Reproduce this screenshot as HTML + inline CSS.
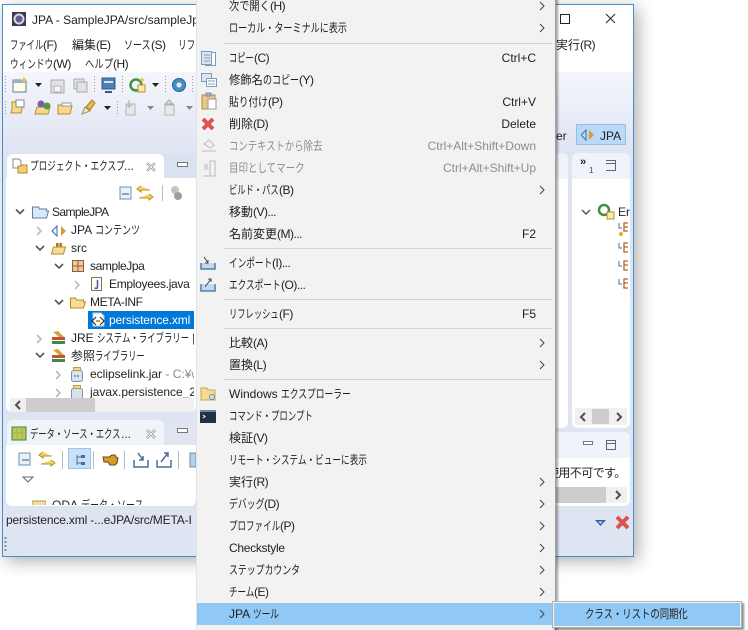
<!DOCTYPE html>
<html><head><meta charset="utf-8"><style>
html,body{margin:0;padding:0;background:#fff}
#r{position:relative;width:748px;height:630px;overflow:hidden;background:#fff;font:12px/16px "Liberation Sans","Noto Sans CJK JP",sans-serif;color:#222}
#r div,#r svg{position:absolute}
.t{white-space:nowrap;height:16px}
.m{left:229px;white-space:nowrap;height:16px;color:#1e1e1e}
.k{right:212px;white-space:nowrap;height:16px;color:#1e1e1e;text-align:right}
.g{color:#8c8c8c}
.s{left:224px;width:328px;height:1px;background:#d4d4d4}
.l{left:0;top:0}
.n{display:inline-block;transform-origin:0 0;white-space:nowrap}
.p{letter-spacing:-.5px}
</style></head><body><div id="r">
<!-- window -->
<div style="left:2px;top:4px;width:632px;height:553px;background:#fff;border:1px solid #3f8fd2;box-sizing:border-box;box-shadow:4px 4px 16px rgba(0,0,0,.32)"></div>
<div style="left:3px;top:72px;width:630px;height:484px;background:linear-gradient(#f5f6fb,#dfe4f3 80px,#dfe4f3)"></div>
<svg style="left:11px;top:11px" width="16" height="16"><rect x="1" y="1" width="14" height="14" fill="#3b3a55"/><circle cx="8" cy="8" r="4.500" fill="#5f5d90" stroke="#d8d8e4" stroke-width="2"/></svg>
<div class="t" style="left:32px;top:12px;color:#222">JPA - SampleJPA/src/sampleJpa</div>
<svg style="left:560px;top:13px" width="60" height="12"><rect x="0.5" y="1.500" width="9" height="9" fill="none" stroke="#222"/><path d="M46 1l9 9M55 1l-9 9" stroke="#222" fill="none"/></svg>
<div class="t" style="left:10px;top:37px"><span class="n" style="width:33px;transform:scaleX(.69)">ファイル</span><span class="p">(F)</span></div>
<div class="t" style="left:72px;top:37px">編集<span class="p">(E)</span></div>
<div class="t" style="left:124px;top:37px"><span class="n" style="width:27px;transform:scaleX(.75)">ソース</span><span class="p">(S)</span></div>
<div class="t" style="left:178px;top:37px"><span class="n" style="width:17px;transform:scaleX(.72)">リフ</span></div>
<div class="t" style="left:556px;top:37px">実行<span class="p">(R)</span></div>
<div class="t" style="left:10px;top:56px"><span class="n" style="width:43px;transform:scaleX(.72)">ウィンドウ</span><span class="p">(W)</span></div>
<div class="t" style="left:85px;top:56px"><span class="n" style="width:28px;transform:scaleX(.78)">ヘルプ</span><span class="p">(H)</span></div>
<!-- toolbar icons -->
<svg class="l" style="left:0;top:72px" width="196" height="50">
<g fill="none" stroke="#9a9a9a" stroke-dasharray="1 2"><path d="M5.500 4V20M5.500 29V44M94.500 4V20M122.500 4V20M165.500 4V20M192.500 4V20M117.500 29V44"/></g>
<rect x="13" y="8" width="13" height="12" fill="#fffbe8" stroke="#5c7fa8"/><rect x="13" y="8" width="13" height="3" fill="#8fb2d6"/><path d="M24 4l1 3 3 1-3 1-1 3-1-3-3-1 3-1z" fill="#e9c23c"/>
<path d="M35 11h7l-3.500 4z" fill="#222"/>
<rect x="51" y="8" width="13" height="13" fill="#e2e2e2" stroke="#aaa"/><rect x="54" y="14" width="7" height="6" fill="#f5f5f5" stroke="#b5b5b5"/>
<rect x="74" y="7" width="10" height="10" fill="#e2e2e2" stroke="#aaa"/><rect x="77" y="10" width="10" height="10" fill="#e2e2e2" stroke="#aaa"/>
<rect x="102" y="6" width="13" height="11" fill="#4f7fb0" stroke="#2f5c8c"/><rect x="104" y="9" width="9" height="2" fill="#d6e4f2"/><path d="M105 20h7" stroke="#2f5c8c" stroke-width="2"/>
<circle cx="136" cy="13" r="5.500" fill="none" stroke="#3d9140" stroke-width="2.500"/><rect x="138" y="13" width="7" height="7" fill="#fbe9b4" stroke="#c08a2a"/><path d="M142 5l1 2 2 1-2 1-1 2-1-2-2-1 2-1z" fill="#e9c23c"/>
<path d="M152 11h7l-3.500 4z" fill="#222"/>
<circle cx="179" cy="13" r="6.500" fill="#4a8fc4" stroke="#1f6098"/><circle cx="179" cy="13" r="2.500" fill="#e8eef5"/>
<path d="M12 37v-7h8l2 2v5l-1 4H11z" fill="#f6d98a" stroke="#b88a2c"/><rect x="16" y="28" width="8" height="7" fill="#fff" stroke="#888"/>
<path d="M35 42l2-7h13l-2 7z" fill="#f6d98a" stroke="#b88a2c"/><circle cx="41" cy="32" r="3.500" fill="#7b5ea8"/><circle cx="47" cy="34" r="3.500" fill="#4b9a45"/>
<path d="M58 42v-9h5l1-2h6v3h2l-2 8z" fill="#f6d98a" stroke="#b88a2c"/><rect x="62" y="31" width="9" height="3" fill="#fff" stroke="#999"/>
<path d="M82 42l3-7 5 4z" fill="#f0ead0" stroke="#a09060"/><path d="M86 35l6-7 3 3-5 7z" fill="#e8b94c" stroke="#a98028"/>
<path d="M104 34h7l-3.500 4z" fill="#222"/>
<rect x="126" y="32" width="9" height="11" fill="#e8e8e8" stroke="#b5b5b5"/><path d="M129 28v7l-3-2m3 2l3-2" stroke="#aaa" fill="none"/>
<path d="M147 34h7l-3.500 4z" fill="#888"/>
<rect x="165" y="33" width="9" height="10" fill="#e8e8e8" stroke="#b5b5b5"/><path d="M165 32l4-4 4 4z" fill="#ddd" stroke="#aaa"/>
<path d="M186 34h7l-3.500 4z" fill="#888"/>
</svg>
<!-- perspective -->
<div style="left:556px;top:128px;width:16px;height:16px;line-height:16px">er</div>
<div style="left:576px;top:124px;width:50px;height:21px;background:#b8d9f7;border:1px solid #94c0e8;box-sizing:border-box"></div>
<svg style="left:581px;top:129px" width="14" height="12"><path d="M5 1v10L0 6z" fill="none" stroke="#4a6fa0"/><path d="M8 1v10l5-5z" fill="#d89a40"/></svg>
<div class="t" style="left:600px;top:128px;color:#222">JPA</div>
<!-- left top pane -->
<div style="left:6px;top:154px;width:190px;height:258px;background:#fff;border-radius:6px"></div>
<div style="left:6px;top:154px;width:190px;height:24px;background:#d9e3f0;border-radius:6px 6px 0 0"></div>
<div style="left:7px;top:154px;width:157px;height:24px;background:#fff;border-radius:6px 6px 0 0"></div>
<svg style="left:12px;top:158px" width="16" height="16"><path d="M1 1h6l2 2v7H1z" fill="#fff" stroke="#888"/><path d="M6 8h3l1-1h5v8H6z" fill="#f5cf6a" stroke="#b88a2c"/></svg>
<div class="t" style="left:30px;top:158px"><span class="n" style="width:94px;transform:scaleX(.72)">プロジェクト・エクスプ</span>...</div>
<svg style="left:146px;top:162px" width="10" height="10"><path d="M1 1l8 8M9 1l-8 8" stroke="#888" stroke-width="2.500"/><path d="M1 1l8 8M9 1l-8 8" stroke="#fff" stroke-width="1"/></svg>
<div style="left:177px;top:162px;width:9px;height:3px;background:#fff;border:1px solid #777"></div>
<svg style="left:118px;top:184px" width="72" height="18"><rect x="2" y="3" width="11" height="12" fill="#e8f0f8" stroke="#6d93b8"/><path d="M4 10h7" stroke="#456"/><path d="M23 2l-4 3 4 3V6h9M31 10l4 3-4 3v-2h-10" fill="#f6d56c" stroke="#b89020"/><path d="M44.500 1v16" stroke="#bbb"/><circle cx="57" cy="6" r="4" fill="#c4c4c4"/><circle cx="60" cy="12" r="4" fill="#9e9e9e"/></svg>
<!-- tree: absolute coords -->
<svg class="l" style="left:0;top:0" width="196" height="400" fill="none">
<g stroke="#555" stroke-width="1.600"><path d="M16 209.500l4 4 4-4M36 246l4 4 4-4M55 264l4 4 4-4M55 300l4 4 4-4M36 353l4 4 4-4"/></g>
<g stroke="#bbb" stroke-width="1.600"><path d="M37 227l4 4-4 4M75 281l4 4-4 4M37 335l4 4-4 4M56 371l4 4-4 4M56 389l4 4-4 4"/></g>
<path d="M32.500 217v-10h6l1 2h7v2h2l-2 7h-14z" fill="#dbe8f5" stroke="#5b7fa8"/>
<path d="M57 226v10l-5-5z" fill="#fff" stroke="#3a6aa0"/><path d="M61 226v10l5-5z" fill="#d89a40"/>
<path d="M51.500 254l2-7h12l-2 7z" fill="#f8dc92" stroke="#b88a2c"/><path d="M56 243h6v4h-6z" fill="#b87333"/><path d="M59 243v4" stroke="#f8dc92"/>
<rect x="72.500" y="260.500" width="11" height="11" fill="#e8c8a8" stroke="#9a5a2a"/><path d="M78 260v12M72 266h12" stroke="#9a5a2a"/>
<path d="M91.500 277.500h10v13h-10z" fill="#fffde8" stroke="#777"/><path d="M97.500 280v7q0 2-3 1" stroke="#3a5fae" stroke-width="1.500"/>
<path d="M70.500 308v-10h5l1 2h7v2h2l-2 6z" fill="#f8dc92" stroke="#b88a2c"/>
<path d="M52 344h13v-3H52z" fill="#3d8a4a"/><path d="M52 340h13v-3H52z" fill="#c8502e"/><path d="M53 332l6 5h5l-6-6z" fill="#c9a93a"/>
<path d="M52 362h13v-3H52z" fill="#3d8a4a"/><path d="M52 358h13v-3H52z" fill="#c8502e"/><path d="M53 350l6 5h5l-6-6z" fill="#c9a93a"/>
<rect x="71.500" y="370.500" width="11" height="11" rx="2" fill="#d6e3f0" stroke="#7b95b0"/><rect x="73.500" y="367.500" width="7" height="3" fill="#f2d78c" stroke="#b89a50"/><path d="M74 376h6" stroke="#456" stroke-dasharray="2 1"/>
<rect x="71.500" y="388.500" width="11" height="11" rx="2" fill="#d6e3f0" stroke="#7b95b0"/><rect x="73.500" y="385.500" width="7" height="3" fill="#f2d78c" stroke="#b89a50"/>
</svg>
<div class="t" style="left:52px;top:204px;letter-spacing:-.6px">SampleJPA</div>
<div class="t" style="left:71px;top:222px">JPA <span class="n" style="width:45px;transform:scaleX(.75)">コンテンツ</span></div>
<div class="t" style="left:71px;top:240px">src</div>
<div class="t" style="left:90px;top:258px;letter-spacing:-.4px">sampleJpa</div>
<div class="t" style="left:109px;top:276px;letter-spacing:-.3px">Employees.java</div>
<div class="t" style="left:90px;top:294px;letter-spacing:-.4px">META-INF</div>
<div style="left:88px;top:311px;width:106px;height:18px;background:#0078d7"></div>
<svg style="left:91px;top:312px" width="14" height="15"><path d="M2 1h8l3 3v10H2z" fill="#fff" stroke="#bcd"/><path d="M5 5L1 9l4 4M9 5l4 4-4 4" stroke="#222" fill="none"/><path d="M5 9h4" stroke="#d89a40" stroke-width="2"/></svg>
<div class="t" style="left:109px;top:312px;color:#fff;letter-spacing:-.15px">persistence.xml</div>
<div class="t" style="left:71px;top:330px;width:123px;overflow:hidden">JRE <span class="n" style="width:92px;transform:scaleX(.7)">システム・ライブラリー</span> [j</div>
<div class="t" style="left:71px;top:348px">参照<span class="n" style="width:50px;transform:scaleX(.69)">ライブラリー</span></div>
<div class="t" style="left:90px;top:366px;width:104px;overflow:hidden">eclipselink.jar<span style="color:#888"> - C:¥w</span></div>
<div style="left:90px;top:384px;width:104px;height:14px;overflow:hidden;white-space:nowrap;line-height:16px">javax.persistence_2.</div>
<div style="left:10px;top:398px;width:184px;height:14px;background:#f0f0f0"></div>
<div style="left:26px;top:398px;width:69px;height:14px;background:#cdcdcd"></div>
<svg style="left:14px;top:400px" width="8" height="10"><path d="M6 1L2 5l4 4" stroke="#505050" stroke-width="2" fill="none"/></svg>
<!-- left bottom pane -->
<div style="left:6px;top:420px;width:190px;height:86px;background:#fff;border-radius:6px"></div>
<div style="left:6px;top:420px;width:190px;height:25px;background:#dfe6f2;border-radius:6px 6px 0 0"></div>
<div style="left:7px;top:420px;width:157px;height:25px;background:#f0f4f9;border-radius:6px 6px 0 0"></div>
<svg style="left:11px;top:425px" width="16" height="16"><rect x="1" y="2" width="14" height="13" fill="#a8d060" stroke="#4a7a3a"/><path d="M6 2v13M11 2v13M1 8h14" stroke="#c8a040"/></svg>
<div class="t" style="left:30px;top:426px"><span class="n" style="width:91px;transform:scaleX(.69)">データ・ソース・エクス</span>...</div>
<svg style="left:146px;top:429px" width="10" height="10"><path d="M1 1l8 8M9 1l-8 8" stroke="#888" stroke-width="2.500"/><path d="M1 1l8 8M9 1l-8 8" stroke="#fff" stroke-width="1"/></svg>
<div style="left:177px;top:428px;width:9px;height:3px;background:#fff;border:1px solid #777"></div>
<div style="left:68px;top:448px;width:23px;height:21px;background:#c9e0f7;border:1px solid #9cc4ec;box-sizing:border-box"></div>
<svg style="left:16px;top:449px" width="180" height="22" fill="none"><rect x="3" y="4" width="11" height="12" fill="#e8f0f8" stroke="#6d93b8"/><path d="M6 11h7" stroke="#456"/><path d="M27 3l-4 3 4 3V7h9M35 11l4 3-4 3v-2H25" fill="#f6d56c" stroke="#b89020"/><path d="M46.500 2v18M77.500 2v18M108.500 2v18M162.500 2v18" stroke="#bbb"/><path d="M61 6v10M61 8h5M61 14h5" stroke="#4a6f98"/><rect x="65" y="6" width="4" height="3" fill="#4a6f98"/><rect x="65" y="13" width="4" height="3" fill="#4a6f98"/><path d="M87 8h6l3-2h3l1 2 2 1-1 5-2 2h-5l-2-3h-4z" fill="#d89a2c" stroke="#6b4410"/><path d="M118 11v7h14v-7M122 4l5 7M127 7v4h-4" stroke="#4a6f98" stroke-width="1.500"/><path d="M141 11v7h14v-7M145 13l7-9M148 4h4v4" stroke="#4a6f98" stroke-width="1.500"/><rect x="174" y="4" width="6" height="14" fill="#b7cfe8" stroke="#6d93b8"/></svg>
<svg style="left:22px;top:476px" width="12" height="8"><path d="M1 1h10L6 6z" fill="#fff" stroke="#666"/></svg>
<div style="left:6px;top:490px;width:190px;height:15px;overflow:hidden"><svg style="left:26px;top:9px" width="14" height="8"><path d="M0 2h14v6H0z" fill="#f5dca0" stroke="#b8963c"/></svg><div class="t" style="left:46px;top:7px;color:#222">ODA <span class="n" style="width:63px;transform:scaleX(.75)">データ・ソース</span></div></div>
<div class="t" style="left:6px;top:512px;letter-spacing:-.15px">persistence.xml -...eJPA/src/META-I</div>
<svg style="left:4px;top:536px" width="3" height="18"><path d="M1.500 1v16" stroke="#889" stroke-dasharray="2 2" stroke-width="2"/></svg>
<!-- right panes -->
<div style="left:556px;top:153px;width:12px;height:275px;background:#fff;border-radius:0 6px 6px 0"></div>
<div style="left:556px;top:153px;width:12px;height:26px;background:#f0f3f9;border-radius:0 6px 0 0"></div>
<div style="left:572px;top:153px;width:58px;height:275px;background:#fff;border-radius:6px"></div>
<div style="left:572px;top:153px;width:58px;height:26px;background:#f0f3f9;border-radius:6px 6px 0 0"></div>
<div style="left:580px;top:157px;font-size:11px;font-weight:bold;line-height:10px">»</div>
<div style="left:589px;top:166px;font-size:8px;line-height:9px;color:#444">1</div>
<svg style="left:606px;top:160px" width="10" height="12"><path d="M0 .5h9.500v10H0M0 3.500h9" fill="none" stroke="#666"/></svg>
<svg style="left:581px;top:203px" width="48" height="90" fill="none"><path d="M1 7l4 4 4-4" stroke="#555" stroke-width="1.500"/><circle cx="23" cy="7" r="5" stroke="#3d9140" stroke-width="2.500"/><rect x="26" y="9" width="7" height="7" fill="#fbe9b4" stroke="#c08a2a"/>
<g stroke="#4a6f98"><path d="M38 20v5h3M38 40v5h3M38 58v5h3M38 76v5h3"/></g><g stroke="#b5651d" stroke-width="1.300"><path d="M47 20h-4v8h4M43 24h4M47 40h-4v9h4M43 44h4M47 58h-4v9h4M43 62h4M47 76h-4v9h4M43 80h4"/></g><circle cx="40" cy="31" r="2" fill="#e0b020"/></svg>
<div class="t" style="left:618px;top:204px">Er</div>
<div style="left:575px;top:408px;width:52px;height:17px;background:#f0f0f0"></div>
<div style="left:592px;top:409px;width:17px;height:15px;background:#cdcdcd"></div>
<svg style="left:579px;top:412px" width="46" height="10"><path d="M6 1L2 5l4 4M38 1l4 4-4 4" stroke="#505050" stroke-width="2" fill="none"/></svg>
<div style="left:556px;top:432px;width:74px;height:74px;background:#fff;border-radius:0 6px 6px 0"></div>
<div style="left:556px;top:432px;width:74px;height:26px;background:#f0f3f9;border-radius:0 6px 0 0"></div>
<div style="left:583px;top:441px;width:8px;height:2px;background:#fff;border:1px solid #777"></div>
<svg style="left:605px;top:439px" width="12" height="12"><path d="M1.500 1.500h9v9h-9zM1.500 4.500h9" fill="none" stroke="#666"/></svg>
<div class="t" style="left:547px;top:465px;color:#222;letter-spacing:-.6px">使用不可です。</div>
<div style="left:556px;top:487px;width:71px;height:16px;background:#f0f0f0"></div>
<div style="left:556px;top:487px;width:50px;height:16px;background:#cdcdcd"></div>
<svg style="left:614px;top:490px" width="8" height="10"><path d="M2 1l4 4-4 4" stroke="#505050" stroke-width="2" fill="none"/></svg>
<svg style="left:595px;top:519px" width="12" height="8"><path d="M0 1h11L5.500 7z" fill="#2f5fa8"/><path d="M3 2.500h5L5.500 5z" fill="#bcd6f2"/></svg>
<svg style="left:615px;top:514px" width="15" height="16"><path d="M2 3l11 11M13 3L2 14" stroke="#d9534f" stroke-width="4"/></svg>
<!-- context menu -->
<div style="left:196px;top:-1px;width:360px;height:632px;background:#f2f2f2;border-right:1px solid #a0a0a0;border-left:1px solid #e4e4e4;box-sizing:border-box;box-shadow:2px 0 2px rgba(0,0,0,.35)"></div>
<div class="s" style="top:43px"></div><div class="s" style="top:248px"></div><div class="s" style="top:299px"></div><div class="s" style="top:328px"></div><div class="s" style="top:379px"></div>
<div style="left:197px;top:603px;width:358px;height:22px;background:#90c8f6"></div>
<div class="m" style="top:-2px"><span class="n" style="width:41px;transform:scaleX(.85)">次で開く</span><span class="p">(H)</span></div>
<div class="m" style="top:20px"><span class="n" style="width:118px;transform:scaleX(.756)">ローカル・ターミナルに表示</span></div>
<div class="m" style="top:50px"><span class="n" style="width:25px;transform:scaleX(.69)">コピー</span><span class="p">(C)</span></div><div class="k" style="top:50px">Ctrl+C</div>
<div class="m" style="top:72px"><span class="n" style="width:34px;transform:scaleX(.94)">修飾名</span><span class="n" style="width:36px;transform:scaleX(.75)">のコピー</span><span class="p">(Y)</span></div>
<div class="m" style="top:94px"><span class="n" style="width:39px;transform:scaleX(.81)">貼り付け</span><span class="p">(P)</span></div><div class="k" style="top:94px">Ctrl+V</div>
<div class="m" style="top:116px">削除<span class="p">(D)</span></div><div class="k" style="top:116px">Delete</div>
<div class="m g" style="top:138px"><span class="n" style="width:94px;transform:scaleX(.78)">コンテキストから除去</span></div><div class="k g" style="top:138px">Ctrl+Alt+Shift+Down</div>
<div class="m g" style="top:160px"><span class="n" style="width:76px;transform:scaleX(.79)">目印としてマーク</span></div><div class="k g" style="top:160px">Ctrl+Alt+Shift+Up</div>
<div class="m" style="top:182px"><span class="n" style="width:50px;transform:scaleX(.69)">ビルド・パス</span><span class="p">(B)</span></div>
<div class="m" style="top:204px">移動<span class="p">(V)...</span></div>
<div class="m" style="top:226px">名前変更<span class="p">(M)...</span></div><div class="k" style="top:226px">F2</div>
<div class="m" style="top:255px"><span class="n" style="width:43px;transform:scaleX(.72)">インポート</span><span class="p">(I)...</span></div>
<div class="m" style="top:277px"><span class="n" style="width:52px;transform:scaleX(.72)">エクスポート</span><span class="p">(O)...</span></div>
<div class="m" style="top:306px"><span class="n" style="width:50px;transform:scaleX(.69)">リフレッシュ</span><span class="p">(F)</span></div><div class="k" style="top:306px">F5</div>
<div class="m" style="top:335px">比較<span class="p">(A)</span></div>
<div class="m" style="top:357px">置換<span class="p">(L)</span></div>
<div class="m" style="top:386px">Windows <span class="n" style="width:70px;transform:scaleX(.73)">エクスプローラー</span></div>
<div class="m" style="top:408px"><span class="n" style="width:84px;transform:scaleX(.7)">コマンド・プロンプト</span></div>
<div class="m" style="top:430px">検証<span class="p">(V)</span></div>
<div class="m" style="top:452px"><span class="n" style="width:138px;transform:scaleX(.72)">リモート・システム・ビューに表示</span></div>
<div class="m" style="top:474px">実行<span class="p">(R)</span></div>
<div class="m" style="top:496px"><span class="n" style="width:35px;transform:scaleX(.74)">デバッグ</span><span class="p">(D)</span></div>
<div class="m" style="top:518px"><span class="n" style="width:51px;transform:scaleX(.71)">プロファイル</span><span class="p">(P)</span></div>
<div class="m" style="top:540px;letter-spacing:-.3px">Checkstyle</div>
<div class="m" style="top:562px"><span class="n" style="width:71px;transform:scaleX(.74)">ステップカウンタ</span></div>
<div class="m" style="top:584px"><span class="n" style="width:25px;transform:scaleX(.71)">チーム</span><span class="p">(E)</span></div>
<div class="m" style="top:606px">JPA <span class="n" style="width:26px;transform:scaleX(.72)">ツール</span></div>
<svg class="l" style="left:539px;top:0" width="6" height="630" fill="none" stroke="#444"><path d="M1 2l4 4-4 4M1 24l4 4-4 4M1 186l4 4-4 4M1 339l4 4-4 4M1 361l4 4-4 4M1 478l4 4-4 4M1 500l4 4-4 4M1 522l4 4-4 4M1 544l4 4-4 4M1 566l4 4-4 4M1 588l4 4-4 4M1 610l4 4-4 4"/></svg>
<!-- menu icons -->
<svg class="l" style="left:198px;top:48px" width="24" height="130" fill="none">
<rect x="7.500" y="4.500" width="10" height="13" fill="#fff" stroke="#7b9cbc"/><rect x="3.500" y="3.500" width="10" height="13" fill="#dbe6f1" stroke="#7b9cbc"/><path d="M6 7h6M6 10h6M6 13h6" stroke="#7b9cbc"/>
<rect x="3.500" y="25.500" width="10" height="8" fill="#dbe6f1" stroke="#7b9cbc"/><rect x="8.500" y="30.500" width="10" height="8" fill="#fff" stroke="#7b9cbc"/><path d="M10 33h7M10 36h7" stroke="#7b9cbc"/>
<rect x="4" y="47" width="13" height="14" fill="#e9c98a" stroke="#a9894a"/><rect x="8" y="45" width="5" height="3" fill="#9fb8d0" stroke="#7b8ca0"/><rect x="10" y="51" width="8" height="10" fill="#fff" stroke="#999"/>
<path d="M5 71l10 10M15 71L5 81" stroke="#d9534f" stroke-width="4"/>
<path d="M6 96l5-4 5 5-4 3zM4 103h14" stroke="#bbb"/>
<path d="M7 122v-5h2v5M12 113h5v15h-5zM5 128h7" stroke="#bbb"/>
</svg>
<svg class="l" style="left:199px;top:255px" width="20" height="40" fill="none" stroke="#4a7fb0"><path d="M2 8v6h14V8" stroke-width="1.500" fill="#c6d9ec"/><path d="M5 2l4 6M9 5v3H6" stroke="#444"/><path d="M2 29v7h14v-7" stroke-width="1.500" fill="#c6d9ec"/><path d="M6 32l6-8M9 24h3v3" stroke="#444"/></svg>
<svg class="l" style="left:200px;top:386px" width="17" height="38"><path d="M1 2h6l1 2h7v10H1z" fill="#f5dc90" stroke="#c9a850"/><circle cx="12" cy="11" r="2.500" fill="#cfe0f0" stroke="#7b8ca0"/><rect x="0" y="24" width="16" height="13" fill="#24303f"/><rect x="0" y="24" width="16" height="2" fill="#6a86a8"/><path d="M3 29l2 1.500-2 1.500" stroke="#fff" fill="none"/></svg>
<!-- submenu -->
<div style="left:552px;top:601px;width:190px;height:27px;background:#f2f2f2;border:1px solid #b0b0b0;box-sizing:border-box;box-shadow:2px 2px 2px rgba(0,0,0,.45)"></div>
<div style="left:554px;top:603px;width:186px;height:23px;background:#90c8f6"></div>
<div class="t" style="left:585px;top:606px;color:#1e1e1e"><span class="n" style="width:103px;transform:scaleX(.78)">クラス・リストの同期化</span></div>
</div></body></html>
